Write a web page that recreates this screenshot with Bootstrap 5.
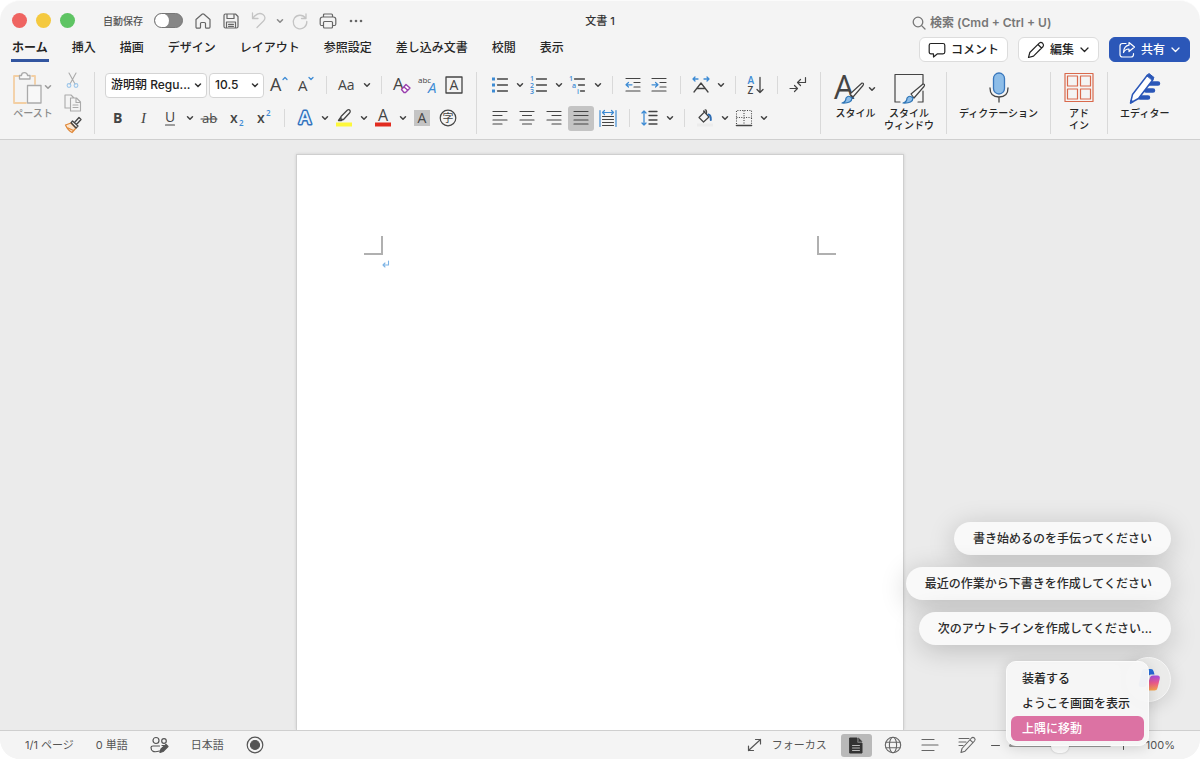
<!DOCTYPE html>
<html lang="ja">
<head>
<meta charset="utf-8">
<meta name="viewport" content="width=device-width, initial-scale=1">
<title>文書 1</title>
<link href="https://cdn.jsdelivr.net/npm/bootstrap@5.3.0/dist/css/bootstrap.min.css" rel="stylesheet">
<style>
  :root { --accent:#2b57b8; }
  body { font-family: Inter, "Noto Sans CJK JP", sans-serif; font-size:12px; line-height:16px; color:#262626; background:#fff; }
  button { background:none; border:0; padding:0; color:inherit; font:inherit; }
  svg { display:block; flex:none; fill:none; stroke:currentColor; stroke-linecap:round; stroke-linejoin:round; overflow:visible; }
  svg text { stroke:none; fill:currentColor; font-family:"Open Sans","Noto Sans CJK JP",sans-serif; }
  .win { border-radius:20px; background:#f4f4f4; border-top:1px solid #fbfbfb; }
  .title-row { display:grid; grid-template-columns:1fr auto 1fr; height:36px; padding:3px 12px 0; align-items:center; }
  .light { width:15px; height:15px; border-radius:50%; }
  .light.close-l { background:#ef6461; } .light.min-l { background:#f4c93f; } .light.max-l { background:#5ec463; }
  .lights { gap:9px; margin-right:28px; }
  .autosave { font-size:10px; color:#555; font-weight:500; gap:11px; }
  .autosave .form-check-input { width:29px; height:15px; margin:0; border:1px solid #777; background-color:#868686; background-size:14px 14px;
    background-image:url("data:image/svg+xml,%3csvg xmlns='http://www.w3.org/2000/svg' viewBox='0 0 14 14'%3e%3ccircle cx='7' cy='7' r='7' fill='%23fff'/%3e%3c/svg%3e") !important; }
  .form-switch { padding:0; min-height:0; margin:0 6px 0 0; }
  .tb { width:28px; height:24px; display:flex; align-items:center; justify-content:center; color:#666; }
  .faint { color:#c4c4c4; }
  .doc-title { font-size:11px; font-weight:500; color:#333; }
  .search-box { color:#777; gap:4px; margin-right:18px; padding-top:4px; }
  .search-box input { border:0; background:none; outline:0; padding:0; width:240px; font-weight:600; color:#777; }
  .search-box input::placeholder { color:#777; opacity:1; }
  .tab-row { height:26px; padding:0 10px 0 11px; }
  .tab-row a { color:#262626; text-decoration:none; font-weight:500; padding:3px 1px 3px; border-bottom:3px solid transparent; white-space:nowrap; }
  .tabs { gap:22px; }
  .tab-row a.current { border-color:#3255a0; font-weight:700; }
  .actions { gap:10px; }
  .pill-btn { height:25px; border:1px solid #dcdcdc; border-radius:6px; background:#fff; font-weight:500; padding:0 8px; gap:5px; display:flex; align-items:center; color:#222; white-space:nowrap; }
  .pill-btn.share { background:var(--accent); color:#fff; border-color:var(--accent); }
  .ribbon { height:77px; padding:9px 0 5px; border-bottom:1px solid #cfcfcf; }
  .grp { padding:0 9px 0 10px; border-right:1px solid #d9d9d9; }
  .grp:last-child { border:0; }
  .grp-lg { padding:0 12px; }
  .rows { display:flex; flex-direction:column; gap:7px; }
  .rw { display:flex; align-items:center; height:26px; }
  .ib { width:26px; height:25px; display:flex; align-items:center; justify-content:center; color:#444; border-radius:3px; }
  .ib.on { background:#c4c4c4; }
  .cv { width:13px; height:25px; display:flex; align-items:center; justify-content:center; color:#444; }
  .sp { width:1px; height:18px; background:#d9d9d9; margin:0 7px 0 8px; }
  .tight { display:flex; gap:1px; }
  .rw .form-select { height:25px; font-size:12px; line-height:16px; font-weight:500; padding:0 16px 0 5px; color:#222; border:1px solid #d4d4d4; border-radius:4px; background-color:#fff; background-position:right 4px center; background-size:8px 8px; margin-right:2px;
    background-image:url("data:image/svg+xml,%3csvg xmlns='http://www.w3.org/2000/svg' viewBox='0 0 8 8'%3e%3cpath fill='none' stroke='%23333' stroke-width='1.5' stroke-linecap='round' d='M1.5 3 4 5.5 6.5 3'/%3e%3c/svg%3e"); }
  .f-name { width:102px; } .f-size { width:55px; }
  .big { display:flex; flex-direction:column; align-items:center; font-size:10px; line-height:12px; font-weight:500; color:#262626; text-align:center; white-space:nowrap; }
  .big .pic { height:35px; display:flex; align-items:flex-start; color:#444; }
  .clipboard { width:95px; padding-right:12px; }
  .clip { width:46px; color:#8c8c8c; }
  .styles { gap:6px; }
  .canvas-area { background:#ebebeb; padding-top:14px; }
  .sheet { width:608px; max-width:100%; background:#fff; border:1px solid #cfcfcf; border-bottom:0; box-shadow:0 0 3px rgba(0,0,0,.12); padding:81px 67px 0; }
  .corner { width:19px; height:19px; border-bottom:2px solid #b0b0b0; }
  .corner.l { border-right:2px solid #b0b0b0; } .corner.r { border-left:2px solid #b0b0b0; }
  .ret { color:#7db4e6; padding:4px 0 0 17px; }
  .status { height:29px; border-top:1px solid #cfcfcf; font-size:11px; color:#555; padding:0 25px; background:#f4f4f4; border-radius:0 0 20px 20px; }
  .status .info { gap:22px; } .status .views { gap:6px; }
  .focus-btn { gap:10px; }
  .pct { padding-left:9px; }
  .vw { width:31px; height:23px; display:flex; align-items:center; justify-content:center; border-radius:3px; color:#666; }
  .vw.on { background:#b9b9b9; color:#333; }
  .zm { width:14px; display:flex; justify-content:center; }
  .zoom-range { width:102px; height:16px; }
  .zoom-range::-webkit-slider-runnable-track { height:3px; background:#999; }
  .zoom-range::-webkit-slider-thumb { width:18px; height:14px; margin-top:-5px; background:#fff; box-shadow:0 0 2px rgba(0,0,0,.25); border-radius:7px; }
  .helper { position:absolute; right:29px; bottom:57px; gap:12px; }
  .chip { height:33px; border-radius:17px; background:#f9f9f9; padding:0 19px; font-weight:500; color:#2c2c2c; box-shadow:0 5px 28px rgba(0,0,0,.2); white-space:nowrap; }
  .pilot { width:45px; height:45px; border-radius:50%; background:#ebebea; border:1px solid #f6f6f6; box-shadow:0 3px 18px rgba(0,0,0,.14); display:flex; align-items:center; justify-content:center; }
  .ctx { position:absolute; right:51px; bottom:13px; width:143px; padding:4px; border-radius:10px; background:rgba(246,246,246,.97); border:1px solid #fbfbfb; box-shadow:0 2px 14px rgba(0,0,0,.15); }
  .ctx button { display:block; width:100%; height:25px; padding:0 11px; text-align:left; font-weight:500; border-radius:6px; white-space:nowrap; }
  .ctx button.hot { background:#dc72a3; color:#fff; }
</style>
</head>
<body>
<svg width="0" height="0" class="position-absolute" aria-hidden="true">
  <symbol id="cv" viewBox="0 0 8 8"><path d="M1.500 2.800 4 5.300 6.500 2.800" stroke-width="1.500"/></symbol>
  <symbol id="cvt" viewBox="0 0 11 11"><path d="M2 4 5.500 7.500 9 4" stroke-width="1.300"/></symbol>
</svg>
<div class="win position-relative d-flex flex-column min-vh-100 overflow-hidden">
  <header>
    <div class="title-row">
      <div class="d-flex align-items-center">
        <div class="lights d-flex"><span class="light close-l"></span><span class="light min-l"></span><span class="light max-l"></span></div>
        <div class="autosave form-switch d-flex align-items-center"><label for="auto">自動保存</label><input class="form-check-input float-none" type="checkbox" role="switch" id="auto"></div>
        <button class="tb" aria-label="ホーム"><svg width="18" height="18" viewBox="0 0 18 18" stroke-width="1.200"><path d="M2 7.500 8 2.200Q9 1.400 10 2.200L16 7.500V15Q16 16.200 15 16.200H12.500Q11.500 16.200 11.500 15.200V11.500Q11.500 10.500 10.500 10.500H7.500Q6.500 10.500 6.500 11.500V15.200Q6.500 16.200 5.500 16.200H3Q2 16.200 2 15Z"/></svg></button>
        <button class="tb" aria-label="保存"><svg width="18" height="18" viewBox="0 0 18 18" stroke-width="1.200"><path d="M3.500 2H13.500L16 4.500V14.500Q16 16 14.500 16H3.500Q2 16 2 14.500V3.500Q2 2 3.500 2ZM5 2V6.500H12V2M4.500 16V10H13.500V16M6.500 12.300H11.500M6.500 14.300H11.500"/></svg></button>
        <button class="tb faint" aria-label="元に戻す"><svg width="18" height="18" viewBox="0 0 18 18" stroke-width="1.300"><path d="M2.500 1V6.500H8M2.800 6.300C6 2 10 .5 13 2.500C15.500 4.500 15.500 7 13.500 9L7 15.500"/></svg></button>
        <button class="cv" aria-label="元に戻す履歴"><svg width="8" height="8" opacity=".6"><use href="#cv"/></svg></button>
        <button class="tb faint" aria-label="やり直し"><svg width="18" height="18" viewBox="0 0 18 18" stroke-width="1.300"><path d="M15 2V6.500H10.500M14.500 6A6.800 6.800 0 1 0 15.800 9.500"/></svg></button>
        <button class="tb" aria-label="印刷"><svg width="18" height="18" viewBox="0 0 18 18" stroke-width="1.200"><path d="M4.500 5V3Q4.500 2 5.500 2H12.500Q13.500 2 13.500 3V5M4.500 13.500H2.500Q1.200 13.500 1.200 12V7.500Q1.200 5 3.700 5H14.300Q16.800 5 16.800 7.500V12Q16.800 13.500 15.500 13.500H13.500M5.500 9.500H12.500Q13.500 9.500 13.500 10.500V15Q13.500 16 12.500 16H5.500Q4.500 16 4.500 15V10.500Q4.500 9.500 5.500 9.500Z"/></svg></button>
        <button class="tb" aria-label="その他"><svg width="16" height="6" viewBox="0 0 16 6" style="fill:currentColor;stroke:none"><circle cx="3" cy="3" r="1.300"/><circle cx="8" cy="3" r="1.300"/><circle cx="13" cy="3" r="1.300"/></svg></button>
      </div>
      <div class="doc-title">文書 1</div>
      <div class="search-box d-flex align-items-center justify-content-end ps-5">
        <label for="q"><svg width="14" height="14" viewBox="0 0 14 14" stroke-width="1.300"><circle cx="6" cy="6" r="4.800"/><path d="M9.600 9.600 13 13"/></svg></label>
        <input id="q" type="search" placeholder="検索 (Cmd + Ctrl + U)">
      </div>
    </div>
    <div class="tab-row d-flex justify-content-between align-items-start">
      <nav class="tabs d-flex">
        <a class="current" href="#">ホーム</a><a href="#">挿入</a><a href="#">描画</a><a href="#">デザイン</a><a href="#">レイアウト</a><a href="#">参照設定</a><a href="#">差し込み文書</a><a href="#">校閲</a><a href="#">表示</a>
      </nav>
      <div class="actions d-flex">
        <button class="pill-btn"><svg width="18" height="18" viewBox="0 0 18 18" stroke-width="1.200"><path d="M3 2.500H15Q16.800 2.500 16.800 4.300V11Q16.800 12.800 15 12.800H9.500L5.500 16V12.800H3Q1.200 12.800 1.200 11V4.300Q1.200 2.500 3 2.500Z"/></svg>コメント</button>
        <button class="pill-btn"><svg width="18" height="18" viewBox="0 0 18 18" stroke-width="1.200"><path d="M1.500 16.500 2.800 11.500 12.500 1.900Q14 .800 15.700 2.300 17.200 4 16.100 5.500L6.500 15.200ZM11 3.500 14.500 7"/></svg>編集<svg width="11" height="11"><use href="#cvt"/></svg></button>
        <button class="pill-btn share"><svg width="18" height="18" viewBox="0 0 18 18" stroke-width="1.200"><path d="M8 2.500H4.500Q2 2.500 2 5V13.500Q2 16 4.500 16H13Q15.500 16 15.500 13.500V12.500M11 1.500 16.500 6 11 10.500V8Q7.500 7.800 5.500 11.500 5.800 5 11 4.200Z"/></svg>共有<svg width="11" height="11"><use href="#cvt"/></svg></button>
      </div>
    </div>
    <div class="ribbon d-flex">
      <div class="grp clipboard d-flex justify-content-between">
        <button class="big clip"><span class="pic"><svg width="30" height="33" viewBox="0 0 30 33" stroke-width="1.300"><path d="M7 4H2V31H14M20 4H23V12" stroke="#f3cfa3" stroke-width="1.800"/><path d="M7.500 7V3.500H9.500A3 2.800 0 0 1 15.500 3.500H18V7Z" stroke="#aaa" fill="#f8f8f8"/><path d="M15.500 13.500H29V31H15.500Z" stroke="#aaa" fill="#f8f8f8"/></svg><span class="cv"><svg width="8" height="8" class="mt-1" opacity=".5"><use href="#cv"/></svg></span></span>ペースト</button>
        <div class="d-flex flex-column justify-content-between align-items-center">
          <button aria-label="切り取り"><svg width="18" height="18" viewBox="0 0 18 18" stroke-width="1.100"><path d="M5 1 11 12M12 1 6 12" stroke="#aaa"/><circle cx="5" cy="13.500" r="1.900" stroke="#9cc6ea"/><circle cx="12" cy="13.500" r="1.900" stroke="#9cc6ea"/></svg></button>
          <button aria-label="コピー"><svg width="18" height="18" viewBox="0 0 18 18" stroke-width="1.100" style="stroke:#aaa"><path d="M6 14H1V1H7L10 4M6.500 4H12.500L16.500 8V17H6.500ZM12 4.500V8.500H16M9 11H14M9 13.500H14"/></svg></button>
          <button aria-label="書式のコピー"><svg width="18" height="18" viewBox="0 0 18 18" stroke-width="1.300"><path d="M1.500 9 7 7 12 12 8 16.500Q4 14.500 1.500 9Z" stroke="#e08a3c" fill="#fbe5cf"/><path d="M4 12 9.500 14.500" stroke="#e08a3c"/><path d="M7 6.800 8.500 5 14 10 12 12ZM10.500 6.500 15 1.500 17 3.500 12.500 8.500" stroke="#444"/></svg></button>
        </div>
      </div>
      <div class="grp rows">
        <div class="rw">
          <select class="form-select f-name" aria-label="フォント"><option>游明朝 Regu...</option></select>
          <select class="form-select f-size" aria-label="フォント サイズ"><option>10.5</option></select>
          <button class="ib" aria-label="フォント拡大"><svg width="20" height="20" viewBox="0 0 20 20"><text x="1" y="16" font-size="18">A</text><path d="M14 4.500 16 2.500 18 4.500" stroke="#3d8bd4" stroke-width="1.300"/></svg></button>
          <button class="ib" aria-label="フォント縮小"><svg width="20" height="20" viewBox="0 0 20 20"><text x="3" y="16" font-size="15">A</text><path d="M14 2.500 16 4.500 18 2.500" stroke="#3d8bd4" stroke-width="1.300"/></svg></button>
          <span class="sp"></span>
          <button class="ib" aria-label="文字種の変換"><svg width="20" height="20" viewBox="0 0 20 20"><text x="1" y="15" font-size="14">Aa</text></svg></button>
          <button class="cv" aria-label="文字種"><svg width="8" height="8"><use href="#cv"/></svg></button>
          <span class="sp"></span>
          <button class="ib" aria-label="書式のクリア"><svg width="20" height="20" viewBox="0 0 20 20"><text x="1" y="15" font-size="17">A</text><path d="M9.500 14.500 14 9.500 18 13 13.500 17.500H12ZM12 12 15.800 15.200" stroke="#9a3fae" stroke-width="1.400" fill="#fff"/></svg></button>
          <button class="ib" aria-label="ルビ"><svg width="20" height="20" viewBox="0 0 20 20"><text x="0" y="8" font-size="8">abc</text><text x="10" y="18" font-size="15" font-style="italic" style="fill:#3d8bd4">A</text></svg></button>
          <button class="ib" aria-label="囲み線"><svg width="20" height="20" viewBox="0 0 20 20"><path d="M2 2H18V18H2Z" stroke-width="1.300"/><text x="5.500" y="15" font-size="14">A</text></svg></button>
        </div>
        <div class="rw">
          <button class="ib" aria-label="太字"><svg width="20" height="20" viewBox="0 0 20 20"><text x="5" y="15" font-size="14" font-weight="700">B</text></svg></button>
          <button class="ib" aria-label="斜体"><svg width="20" height="20" viewBox="0 0 20 20"><text x="7" y="15" font-size="15" font-style="italic" style="font-family:'Liberation Serif',serif">I</text></svg></button>
          <button class="ib" aria-label="下線"><svg width="20" height="20" viewBox="0 0 20 20"><text x="5" y="14" font-size="14">U</text><path d="M5.500 17H14.500" stroke-width="1.200"/></svg></button>
          <button class="cv" aria-label="下線の種類"><svg width="8" height="8"><use href="#cv"/></svg></button>
          <span class="tight">
            <button class="ib" aria-label="取り消し線"><svg width="20" height="20" viewBox="0 0 20 20"><text x="3" y="15" font-size="13">ab</text><path d="M2 11H18" stroke-width="1.100"/></svg></button>
            <button class="ib" aria-label="下付き"><svg width="20" height="20" viewBox="0 0 20 20"><text x="4" y="15" font-size="14" font-weight="600">x</text><text x="13" y="18" font-size="8" font-weight="600" style="fill:#3d8bd4">2</text></svg></button>
            <button class="ib" aria-label="上付き"><svg width="20" height="20" viewBox="0 0 20 20"><text x="4" y="15" font-size="14" font-weight="600">x</text><text x="13" y="8" font-size="8" font-weight="600" style="fill:#3d8bd4">2</text></svg></button>
          </span>
          <span class="sp"></span>
          <button class="ib" aria-label="文字の効果"><svg width="20" height="20" viewBox="0 0 20 20"><text x="4" y="16" font-size="18" font-weight="600" style="fill:#e8f2fb;stroke:#3272bd;stroke-width:3;paint-order:stroke">A</text></svg></button>
          <button class="cv" aria-label="効果の種類"><svg width="8" height="8"><use href="#cv"/></svg></button>
          <button class="ib" aria-label="蛍光ペン"><svg width="20" height="20" viewBox="0 0 20 20"><path d="M2 14.500H18V18.500H2Z" style="fill:#fdf83c;stroke:none"/><path d="M7 8.500 13.500 2Q15 1.200 16 2.500 16.700 4 15.500 5L9.500 11.500H7ZM7 9 4.500 12.500H7.500L9 11.500" stroke-width="1.300"/></svg></button>
          <button class="cv" aria-label="蛍光ペンの色"><svg width="8" height="8"><use href="#cv"/></svg></button>
          <button class="ib" aria-label="フォントの色"><svg width="20" height="20" viewBox="0 0 20 20"><path d="M2 14.500H18V18.500H2Z" style="fill:#e22c20;stroke:none"/><text x="5" y="13" font-size="16">A</text></svg></button>
          <button class="cv" aria-label="色の種類"><svg width="8" height="8"><use href="#cv"/></svg></button>
          <button class="ib" aria-label="文字の網かけ"><svg width="20" height="20" viewBox="0 0 20 20"><path d="M2 2H18V18H2Z" style="fill:#c4c4c4;stroke:none"/><text x="5.500" y="15" font-size="14">A</text></svg></button>
          <button class="ib" aria-label="囲い文字"><svg width="20" height="20" viewBox="0 0 20 20"><circle cx="10" cy="10" r="7.800" stroke-width="1.200"/><text x="4.500" y="14" font-size="11">字</text></svg></button>
        </div>
      </div>
      <div class="grp rows">
        <div class="rw">
          <button class="ib" aria-label="箇条書き"><svg width="20" height="20" viewBox="0 0 20 20" stroke-width="1.300"><path d="M2 2.500H5V5.500H2ZM2 8.500H5V11.500H2ZM2 14.500H5V17.500H2Z" style="fill:#3d8bd4;stroke:none"/><path d="M7.500 4H17.500M7.500 10H17.500M7.500 16H17.500"/></svg></button>
          <button class="cv" aria-label="行頭文字"><svg width="8" height="8"><use href="#cv"/></svg></button>
          <button class="ib" aria-label="段落番号"><svg width="20" height="20" viewBox="0 0 20 20" stroke-width="1.300"><g font-size="7" font-weight="600" color="#3d8bd4"><text x="1" y="6">1</text><text x="1" y="12.500">2</text><text x="1" y="19">3</text></g><path d="M7.500 4H17.500M7.500 10H17.500M7.500 16H17.500"/></svg></button>
          <button class="cv" aria-label="番号の種類"><svg width="8" height="8"><use href="#cv"/></svg></button>
          <button class="ib" aria-label="アウトライン"><svg width="20" height="20" viewBox="0 0 20 20" stroke-width="1.300"><g font-size="7" font-weight="600" color="#3d8bd4"><text x="1" y="6">1</text><text x="4" y="12.500">a</text><text x="9" y="19">i</text></g><path d="M6.500 4H16.500M10.500 10H16.500M12.500 16H16.500"/></svg></button>
          <button class="cv" aria-label="リストの種類"><svg width="8" height="8"><use href="#cv"/></svg></button>
          <span class="sp"></span>
          <button class="ib" aria-label="インデント減"><svg width="20" height="20" viewBox="0 0 20 20" stroke-width="1.200"><path d="M3 3.500H17M11 7.500H17M11 12H17M3 16H17"/><path d="M9 9.800H3M5.500 7.500 3 9.800 5.500 12" stroke="#3d8bd4"/></svg></button>
          <button class="ib" aria-label="インデント増"><svg width="20" height="20" viewBox="0 0 20 20" stroke-width="1.200"><path d="M3 3.500H17M11 7.500H17M11 12H17M3 16H17"/><path d="M3 9.800H9M6.500 7.500 9 9.800 6.500 12" stroke="#3d8bd4"/></svg></button>
          <span class="sp"></span>
          <button class="ib" aria-label="拡張書式"><svg width="20" height="20" viewBox="0 0 20 20" stroke-width="1.300"><path d="M3 17 10 8 17 17M6 13.500H14"/><path d="M7 4H2.500M4 2 2 4 4 6M13 4H17.500M16 2 18 4 16 6" stroke="#3d8bd4"/></svg></button>
          <button class="cv" aria-label="拡張書式の種類"><svg width="8" height="8"><use href="#cv"/></svg></button>
          <span class="sp"></span>
          <button class="ib" aria-label="並べ替え"><svg width="20" height="20" viewBox="0 0 20 20" stroke-width="1.300"><text x="1.500" y="9" font-size="10" font-weight="600" style="fill:#3d8bd4">A</text><text x="1.500" y="18.500" font-size="10" font-weight="600">Z</text><path d="M14 2.500V17.500M11 14.500 14 17.500 17 14.500"/></svg></button>
          <span class="sp"></span>
          <button class="ib" aria-label="編集記号"><svg width="20" height="20" viewBox="0 0 20 20" stroke-width="1.200"><path d="M17.500 2.500V7.500H9.500M12.500 4.500 9.500 7.500 12.500 10.500M2 13.500H9.500M6.500 10.500 9.500 13.500 6.500 16.500"/></svg></button>
        </div>
        <div class="rw">
          <span class="tight">
            <button class="ib" aria-label="左揃え"><svg width="20" height="20" viewBox="0 0 20 20" stroke-width="1.200"><path d="M3 3.500H17M3 7.500H12M3 12H17M3 16H12"/></svg></button>
            <button class="ib" aria-label="中央揃え"><svg width="20" height="20" viewBox="0 0 20 20" stroke-width="1.200"><path d="M3 3.500H17M5.500 7.500H14.500M3 12H17M5.500 16H14.500"/></svg></button>
            <button class="ib" aria-label="右揃え"><svg width="20" height="20" viewBox="0 0 20 20" stroke-width="1.200"><path d="M3 3.500H17M8 7.500H17M3 12H17M8 16H17"/></svg></button>
            <button class="ib on" aria-label="両端揃え"><svg width="20" height="20" viewBox="0 0 20 20" stroke-width="1.200"><path d="M3 3.500H17M3 7.500H17M3 12H17M3 16H17"/></svg></button>
            <button class="ib" aria-label="均等割り付け"><svg width="20" height="20" viewBox="0 0 20 20" stroke-width="1.200"><path d="M4.500 8.500H15.500M4.500 11.500H15.500M4.500 14.500H15.500M4.500 17.500H15.500"/><path d="M2 2.500V18.500M18 2.500V18.500M4.500 4.500H15.500M6.500 2.500 4.500 4.500 6.500 6.500M13.500 2.500 15.500 4.500 13.500 6.500" stroke="#3d8bd4"/></svg></button>
          </span>
          <span class="sp"></span>
          <button class="ib" aria-label="行間"><svg width="20" height="20" viewBox="0 0 20 20" stroke-width="1.300"><path d="M9 3.500H17M9 7.500H17M9 12H17M9 16H17"/><path d="M4 3V17M2 5 4 3 6 5M2 15 4 17 6 15" stroke="#3d8bd4"/></svg></button>
          <button class="cv" aria-label="行間の種類"><svg width="8" height="8"><use href="#cv"/></svg></button>
          <span class="sp"></span>
          <button class="ib" aria-label="塗りつぶし"><svg width="20" height="20" viewBox="0 0 20 20" stroke-width="1.200"><path d="M2 15.500H18V18.500H2Z" style="fill:#ececec;stroke:none"/><path d="M8.500 3 14 9 8.500 14 4 9.500 10 3.500M10 2Q12 1.500 11.500 5.500"/><path d="M13.500 6.500Q16 7 15.800 12" stroke="#2e6db4" stroke-width="2"/></svg></button>
          <button class="cv" aria-label="塗りの色"><svg width="8" height="8"><use href="#cv"/></svg></button>
          <button class="ib" aria-label="罫線"><svg width="20" height="20" viewBox="0 0 20 20" stroke-width="1.100"><path d="M2.500 16V2.500H17.500V16M10 2.500V16M2.500 9.500H17.500" stroke-dasharray="1 1.400" stroke-linecap="butt"/><path d="M2.500 17.500H17.500" stroke-width="1.600"/></svg></button>
          <button class="cv" aria-label="罫線の種類"><svg width="8" height="8"><use href="#cv"/></svg></button>
        </div>
      </div>
      <div class="grp grp-lg styles d-flex">
        <button class="big"><span class="pic"><svg width="32" height="34" viewBox="0 0 32 34" stroke-width="1.200"><text x="1" y="27" font-size="32">A</text><path d="M17 22 29 11Q31.500 11 30 13.500L20 25Z" fill="#f8f8f8"/><path d="M9 31Q13 30 13 26 15.500 22.500 19 26 19 31.500 9 31Z" style="stroke:#2e75b6;fill:#8dbde8"/></svg><span class="cv mt-1"><svg width="8" height="8"><use href="#cv"/></svg></span></span>スタイル</button>
        <button class="big"><span class="pic"><svg width="34" height="34" viewBox="0 0 34 34" stroke-width="1.200"><path d="M8 30H3V2.500H31V12M31 19V30H26"/><path d="M19 22 31 12Q33.500 12 32 14.500L22 26Z" fill="#f8f8f8"/><path d="M11 31Q15 30 15 26 17.500 22.500 21 26 21 31.500 11 31Z" style="stroke:#2e75b6;fill:#8dbde8"/></svg></span>スタイル<br>ウィンドウ</button>
      </div>
      <div class="grp grp-lg"><button class="big"><span class="pic"><svg width="20" height="34" viewBox="0 0 20 34" stroke-width="1.300"><rect x="4.500" y="1" width="11" height="21" rx="5.500" fill="#8dbde8" stroke="#3a78bd"/><path d="M1 16Q1 25 10 25T19 16M10 25V30"/></svg></span>ディクテーション</button></div>
      <div class="grp grp-lg"><button class="big"><span class="pic"><svg width="32" height="32" viewBox="-1 0 32 32" stroke-width="1.200" style="stroke:#d9694c"><path d="M1 1.500H29V29.500H1ZM3.500 4H13.500V14H3.500ZM16.500 4H26.500V14H16.500ZM3.500 17H13.500V27H3.500ZM16.500 17H26.500V27H16.500Z"/></svg></span>アド<br>イン</button></div>
      <div class="grp grp-lg"><button class="big"><span class="pic"><svg width="34" height="34" viewBox="0 0 34 34" style="stroke:#2b57b8"><path d="M21 11.500H30M18 18.500H25M12 25.500H20" stroke-width="4.500"/><path d="M2.500 31 4.500 22.500 19.500 3 25 7.500 10.500 26.500Z" stroke-width="1.500" fill="#fff"/><path d="M19 3.500 21 1.500 26 5.500 24.500 8Z" style="fill:#2b57b8"/><path d="M2.500 31 3 28 5 29.500Z" style="fill:#2b57b8"/></svg></span>エディター</button></div>
    </div>
  </header>

  <main class="canvas-area flex-grow-1 d-flex justify-content-center">
    <article class="sheet">
      <div class="d-flex justify-content-between"><span class="corner l"></span><span class="corner r"></span></div>
      <div class="ret"><svg width="9" height="10" viewBox="0 0 9 10" stroke-width="1.100"><path d="M7.500 2V6H2M4 4 2 6 4 8"/></svg></div>
    </article>
  </main>

  <footer class="status d-flex justify-content-between align-items-center">
    <div class="info d-flex align-items-center">
      <span>1/1 ページ</span><span>0 単語</span>
      <button aria-label="校正"><svg width="19" height="18" viewBox="0 0 19 18" stroke-width="1.200"><circle cx="6" cy="4.500" r="3"/><circle cx="14" cy="5" r="2.300"/><path d="M9.500 15Q1 17.500 1 11.500 1 10 3 10H9.500M12 9.500H14"/><path d="M10 16.500 11 13 16 8.500 18 10.500 13 15.500Z" style="fill:currentColor"/></svg></button>
      <span>日本語</span>
      <button aria-label="マクロの記録"><svg width="18" height="18" viewBox="0 0 18 18" stroke-width="1.200"><circle cx="9" cy="9" r="7.800"/><circle cx="9" cy="9" r="4.500" style="fill:currentColor"/></svg></button>
    </div>
    <div class="views d-flex align-items-center">
      <button class="focus-btn d-flex align-items-center me-2"><svg width="15" height="14" viewBox="0 0 15 14" stroke-width="1.200"><path d="M1.500 12.500 13.500 1.500M8.500 1.500H13.500V6M1.500 8V12.500H6.500"/></svg>フォーカス</button>
      <button class="vw on" aria-label="印刷レイアウト"><svg width="14" height="17" viewBox="0 0 14 17"><path d="M1 1H8V6H13V16H1Z" style="fill:currentColor"/><path d="M9.500 1 13 4.500H9.500Z" style="fill:currentColor" stroke-width=".5"/><path d="M3.500 8.500H10.500M3.500 11H10.500M3.500 13.500H10.500" stroke="#b9b9b9"/></svg></button>
      <button class="vw" aria-label="Web レイアウト"><svg width="18" height="18" viewBox="0 0 18 18" stroke-width="1.100"><circle cx="9" cy="9" r="7.700"/><ellipse cx="9" cy="9" rx="3.600" ry="7.700"/><path d="M2 6.200H16M2 11.800H16"/></svg></button>
      <button class="vw" aria-label="アウトライン"><svg width="18" height="14" viewBox="0 0 18 14" stroke-width="1.200"><path d="M1 1.500H13M1 7H17M1 12.500H13"/></svg></button>
      <button class="vw" aria-label="下書き"><svg width="18" height="18" viewBox="0 0 18 18" stroke-width="1.100"><path d="M1 2.500H11M1 6H8M1 9.500H5M3 16.500 4 12.500 13.500 2Q15 .800 16.500 2.200 17.800 3.500 16.500 5L7 15.200ZM12 3.800 15 6.700"/></svg></button>
      <button class="zm" aria-label="縮小"><svg width="9" height="9" viewBox="0 0 9 9"><path d="M.500 4.500H8.500"/></svg></button>
      <input type="range" class="form-range zoom-range" aria-label="ズーム" min="0" max="200" value="100">
      <button class="zm" aria-label="拡大"><svg width="9" height="9" viewBox="0 0 9 9"><path d="M.500 4.500H8.500M4.500.500V8.500"/></svg></button>
      <span class="pct">100%</span>
    </div>
  </footer>

  <aside class="helper d-flex flex-column align-items-end">
    <button class="chip">書き始めるのを手伝ってください</button>
    <button class="chip">最近の作業から下書きを作成してください</button>
    <button class="chip">次のアウトラインを作成してください...</button>
    <button class="pilot" aria-label="Copilot"><svg width="24" height="24" viewBox="0 0 24 24" style="stroke:none"><defs><linearGradient id="cp1" x1="0" y1="0" x2="0" y2="1"><stop offset="0" stop-color="#a64de0"/><stop offset=".5" stop-color="#ef5a8c"/><stop offset="1" stop-color="#f9a64a"/></linearGradient><linearGradient id="cp2" x1="0" y1="0" x2="1" y2="1"><stop offset="0" stop-color="#2b8de8"/><stop offset="1" stop-color="#2347c8"/></linearGradient></defs><path d="M7 1H14Q16 1 16.500 3L17.500 6.500H14Q12 6.500 11.500 8.500L9.500 17Q9 19 7 19H4Q1 19 2 15L5 3Q5.500 1 7 1Z" fill="url(#cp2)"/><path d="M16 7.500H20.500Q23.500 7.500 22.700 11L20.500 20Q20 22.500 17.500 22.500H11Q9 22.500 9.500 20.500L13 9.500Q13.500 7.500 16 7.500Z" fill="url(#cp1)"/></svg></button>
  </aside>
  <div class="ctx" role="menu">
    <button role="menuitem">装着する</button>
    <button role="menuitem">ようこそ画面を表示</button>
    <button role="menuitem" class="hot">上隅に移動</button>
  </div>
</div>
<script src="https://cdn.jsdelivr.net/npm/bootstrap@5.3.0/dist/js/bootstrap.bundle.min.js"></script>
</body>
</html>
